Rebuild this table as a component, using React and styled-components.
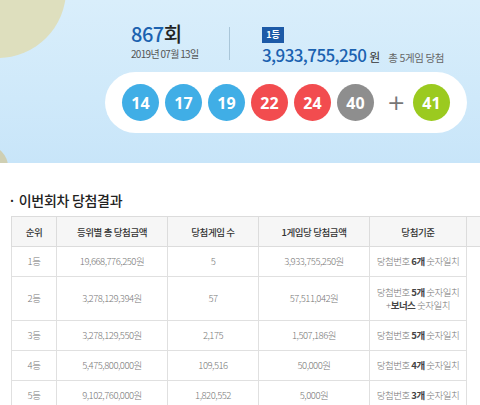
import styled, { createGlobalStyle } from 'styled-components';

const GlobalStyle = createGlobalStyle`
  body {
    margin: 0;
    width: 480px;
    height: 405px;
    overflow: hidden;
    background: #ffffff;
    font-family: "Noto Sans CJK KR", "Noto Sans", sans-serif;
  }
`;

const Banner = styled.div`
  position: relative;
  height: 163px;
  overflow: hidden;
  background: linear-gradient(180deg, #d9eefb 0%, #cfe9fa 60%, #c8e5f9 100%);
  padding: 22px 0 0 105px;
  box-sizing: border-box;
`;

const Blob = styled.div`
  position: absolute;
  border-radius: 50%;
  background: ${p => p.color};
  left: ${p => p.x}px;
  top: ${p => p.y}px;
  width: ${p => p.size}px;
  height: ${p => p.size}px;
`;

const InfoRow = styled.div`
  position: relative;
  display: flex;
  align-items: flex-start;
  margin-left: 26px;
  height: 50px;
`;

const RoundBlock = styled.div`
  width: 98px;
  display: flex;
  flex-direction: column;
`;

const RoundNo = styled.div`
  font-size: 20px;
  line-height: 24px;
  font-weight: 500;
  color: #222;
  letter-spacing: -0.5px;
  span { color: #1b62b0; }
`;

const DrawDate = styled.div`
  font-size: 10px;
  line-height: 14px;
  color: #555;
  letter-spacing: -0.7px;
  margin-top: 1px;
`;

const Divider = styled.div`
  width: 1px;
  height: 33px;
  margin-top: 5px;
  background: #a9c6d9;
`;

const PrizeBlock = styled.div`
  margin-left: 32px;
  margin-top: 5px;
  display: flex;
  flex-direction: column;
  align-items: flex-start;
`;

const Badge = styled.div`
  width: 22px;
  height: 16px;
  background: #1d5aa7;
  color: #fff;
  font-size: 9px;
  font-weight: 700;
  line-height: 16px;
  text-align: center;
`;

const PrizeLine = styled.div`
  display: flex;
  align-items: baseline;
  margin-top: 1px;
`;

const Amount = styled.span`
  font-size: 17px;
  line-height: 22px;
  font-weight: 500;
  color: #1b62b0;
  letter-spacing: -0.6px;
`;

const Won = styled.span`
  font-size: 12px;
  color: #333;
  margin-left: 3px;
`;

const Winners = styled.span`
  font-size: 10.5px;
  color: #666;
  margin-left: 8px;
  letter-spacing: -0.4px;
`;

const Pill = styled.div`
  position: relative;
  width: 362px;
  height: 61px;
  border-radius: 31px;
  background: #ffffff;
  display: flex;
  align-items: center;
  padding-left: 17px;
  box-sizing: border-box;
  gap: 6px;
`;

const Ball = styled.div`
  width: 37px;
  height: 37px;
  border-radius: 50%;
  background: ${p => p.color};
  color: #fff;
  font-size: 16px;
  font-weight: 700;
  display: flex;
  align-items: center;
  justify-content: center;
  font-family: "Noto Sans", sans-serif;
`;

const Plus = styled.div`
  width: 13px;
  margin: 0 7px;
  font-size: 22px;
  line-height: 22px;
  color: #777;
  text-align: center;
  font-family: "DejaVu Sans", sans-serif;
`;

const Section = styled.div`
  padding: 27px 0 0 11px;
`;

const Title = styled.h2`
  margin: 0 0 6px -3px;
  font-size: 14px;
  line-height: 20px;
  font-weight: 500;
  color: #222;
  letter-spacing: -0.3px;
  &::before {
    content: '·';
    margin-right: 3px;
  }
`;

const TableWrap = styled.div`
  width: 469px;
  overflow: hidden;
`;

const Table = styled.table`
  border-collapse: collapse;
  table-layout: fixed;
  width: 560px;
`;

const Th = styled.th`
  height: 29px;
  padding: 0;
  border: 1px solid #dcdcdc;
  background: #f6f6f6;
  font-size: 9.5px;
  font-weight: 500;
  color: #333;
  letter-spacing: -0.4px;
`;

const Td = styled.td`
  height: ${p => p.h || 29}px;
  padding: 0;
  border: 1px solid #e0e0e0;
  font-size: 9.5px;
  font-weight: 300;
  color: #777;
  text-align: center;
  line-height: 13px;
  letter-spacing: -0.5px;
  b { font-weight: 700; color: #444; }
`;

const balls = [
  { n: 14, c: '#40aee6' },
  { n: 17, c: '#40aee6' },
  { n: 19, c: '#40aee6' },
  { n: 22, c: '#f24c4f' },
  { n: 24, c: '#f24c4f' },
  { n: 40, c: '#8e8e8e' },
];

const rows = [
  { rank: '1등', total: '19,668,776,250원', games: '5', each: '3,933,755,250원', rule: <>당첨번호 <b>6개</b> 숫자일치</> },
  { rank: '2등', total: '3,278,129,394원', games: '57', each: '57,511,042원', h: 43, rule: <>당첨번호 <b>5개</b> 숫자일치<br />+<b>보너스</b> 숫자일치</> },
  { rank: '3등', total: '3,278,129,550원', games: '2,175', each: '1,507,186원', rule: <>당첨번호 <b>5개</b> 숫자일치</> },
  { rank: '4등', total: '5,475,800,000원', games: '109,516', each: '50,000원', rule: <>당첨번호 <b>4개</b> 숫자일치</> },
  { rank: '5등', total: '9,102,760,000원', games: '1,820,552', each: '5,000원', rule: <>당첨번호 <b>3개</b> 숫자일치</> },
];

export default function App() {
  return (
    <>
      <GlobalStyle />
      <Banner>
        <Blob color="#dedfbe" x={-70} y={-78} size={136} />
        <Blob color="#cfcfb3" x={-36} y={145} size={44} />
        <InfoRow>
          <RoundBlock>
            <RoundNo><span>867</span>회</RoundNo>
            <DrawDate>2019년 07월 13일</DrawDate>
          </RoundBlock>
          <Divider />
          <PrizeBlock>
            <Badge>1등</Badge>
            <PrizeLine>
              <Amount>3,933,755,250</Amount>
              <Won>원</Won>
              <Winners>총 5게임 당첨</Winners>
            </PrizeLine>
          </PrizeBlock>
        </InfoRow>
        <Pill>
          {balls.map(b => <Ball key={b.n} color={b.c}>{b.n}</Ball>)}
          <Plus>+</Plus>
          <Ball color="#9bca1f">41</Ball>
        </Pill>
      </Banner>
      <Section>
        <Title>이번회차 당첨결과</Title>
        <TableWrap>
          <Table>
            <colgroup>
              <col style={{ width: 45 }} />
              <col style={{ width: 111 }} />
              <col style={{ width: 91 }} />
              <col style={{ width: 111 }} />
              <col style={{ width: 97 }} />
              <col style={{ width: 105 }} />
            </colgroup>
            <thead>
              <tr>
                <Th>순위</Th>
                <Th>등위별 총 당첨금액</Th>
                <Th>당첨게임 수</Th>
                <Th>1게임당 당첨금액</Th>
                <Th>당첨기준</Th>
                <Th />
              </tr>
            </thead>
            <tbody>
              {rows.map((r, i) => (
                <tr key={r.rank}>
                  <Td h={r.h}>{r.rank}</Td>
                  <Td h={r.h}>{r.total}</Td>
                  <Td h={r.h}>{r.games}</Td>
                  <Td h={r.h}>{r.each}</Td>
                  <Td h={r.h}>{r.rule}</Td>
                  {i === 0 && <Td rowSpan={5} />}
                </tr>
              ))}
            </tbody>
          </Table>
        </TableWrap>
      </Section>
    </>
  );
}
